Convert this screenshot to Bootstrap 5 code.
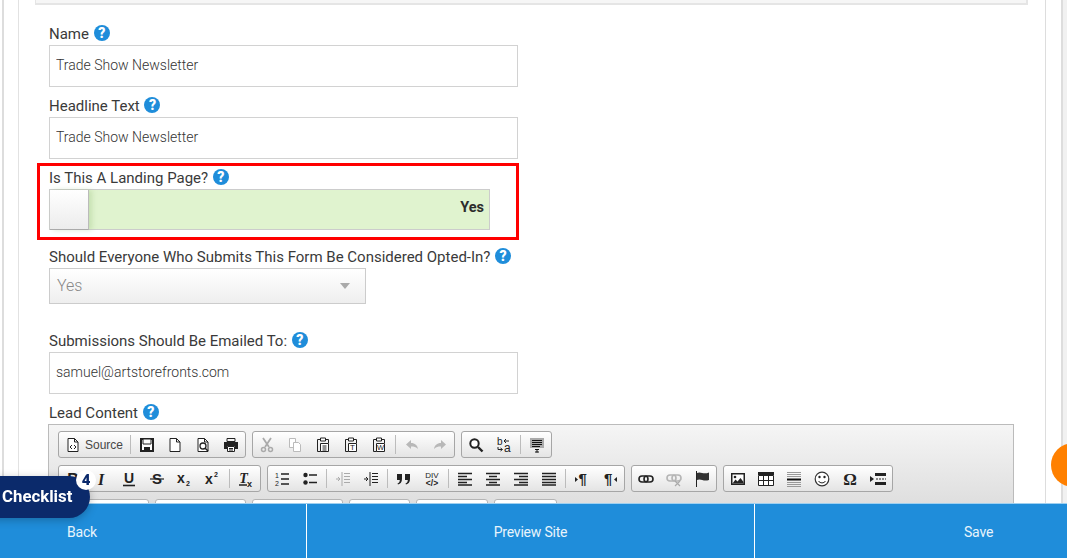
<!DOCTYPE html>
<html lang="en"><head><meta charset="utf-8"><title>Form</title>
<link href="https://cdn.jsdelivr.net/npm/bootstrap@5.3.0/dist/css/bootstrap.min.css" rel="stylesheet">
<style>
html,body{height:558px;overflow:hidden;background:#fff}
body{font-family:Roboto,"Liberation Sans",sans-serif;color:#333;font-size:15px}
.rail-r{position:fixed;top:0;right:0;width:6px;height:558px;background:#f1f1f1;border-left:2px solid #ddd}
.outer{margin-left:2px;border-left:2px solid #ddd;height:558px;width:1059px;padding-left:14px}
.panel{border-left:1px solid #e2e2e2;border-right:1px solid #ddd;width:1028px;height:558px;padding:0 17px 0 16px}
.strip{height:5px;background:#f6f6f6;border-right:2px solid #e5e5e5;border-bottom:2px solid #e5e5e5;border-left:1px solid #e5e5e5;width:993px;margin-bottom:19px}
.fwrap{padding-left:14px}
.lbl{display:block;height:21px;line-height:21px;margin:0;color:#3a3a3a;font-size:15px;white-space:nowrap}
.hlp{display:inline-block;width:16px;height:16px;margin-left:1px;border-radius:50%;background:#1f8dda;color:#fff;font-weight:900;font-size:14px;line-height:16px;text-align:center;vertical-align:1px}
.fld.form-control{width:469px;height:42px;border:1px solid #d2d2d2;border-radius:0;padding:0 6px 2px;font-size:14px;font-weight:300;color:#333;box-shadow:none;margin-bottom:9px}
.redbox{width:482px;margin:-5px 0 7px -12px;border:3px solid #f00;padding:2px 0 7px 9px}
.tgl{width:441px;height:41px;background:#e0f3cf;border:1px solid #ccc}
.knob{width:39px;height:40px;background:linear-gradient(#fff,#ececec);border-right:1px solid #bbb;border-bottom:1px solid #aaa;box-shadow:3px 0 5px rgba(150,190,120,.35)}
.yes{font-weight:700;font-size:14.5px;color:#2c2c2c;padding:0 5px 4px 0}
.sel{width:317px;height:36px;margin-bottom:27px;border:1px solid #ccc;background:linear-gradient(#fff,#eee);color:#888;font-size:16px;font-weight:300;padding:0 15px 0 7px}
.caret{width:0;height:0;border-left:5.5px solid transparent;border-right:5.5px solid transparent;border-top:6px solid #aaa}
.editor{margin-left:-1px;width:966px;height:135px;border:1px solid #bbb;border-bottom:0;background:linear-gradient(#f5f5f5,#cfcfcf);padding:6px 0 0 9px}
.tbrow{height:27px;margin-bottom:7px;gap:6px}
.tgrp{height:27px;border:1px solid #a6a6a6;border-radius:3px;background:linear-gradient(#fff,#e4e4e4)}
.tb{width:28px;height:25px;display:flex;align-items:center;justify-content:center;flex:none}
.tb svg{width:16px;height:16px;display:block;overflow:visible}
.tb text{font-family:"Liberation Sans",sans-serif;fill:#222}
.sp{width:5px;height:19px;margin-top:3px;flex:none;position:relative}
.sp::after{content:"";position:absolute;left:2px;top:0;width:1px;height:19px;background:#bcbcbc}
.srcb{width:69px;height:25px;padding-left:6px;gap:4px;font:12px "Liberation Sans",sans-serif;color:#474747;flex:none}
.srcb svg{width:16px;height:16px}
.combo{height:30px;background:#fff;border:1px solid #b5b5b5;border-radius:3px}
.cw91{width:91px}.cw61{width:61px}.cw72{width:72px}.cw63{width:63px}
.botbar{height:55px;background:#1f8dda;border-top:1px solid #9fd0f0}
.botbar a{color:#e8f4fc;text-decoration:none;font-size:14px;height:54px;letter-spacing:-.2px;padding-top:2px}
.bk{width:306px;padding-left:67px}
.pv{width:449px;border-left:1px solid #fff;border-right:1px solid #fff;justify-content:center}
.sv{flex:1;padding-left:209px}
.chk{position:fixed;left:-20px;top:476px;width:110px;height:42px;background:#0b2a6b;border-radius:0 21px 21px 0;color:#fff;font-weight:700;font-size:16.8px;line-height:41px;padding-left:22px;box-shadow:0 2px 8px rgba(0,0,0,.25);z-index:1040}
.chk b{position:absolute;right:-6px;top:-6px;width:20px;height:20px;border-radius:50%;background:#fff;color:#0b2a6b;font-size:15px;line-height:20px;text-align:center;font-weight:900}
.orb{position:fixed;left:1051px;top:443px;width:44px;height:44px;border-radius:50%;background:#ff8000}
</style></head><body>
<svg width="0" height="0" style="position:absolute" aria-hidden="true"><defs>
<g id="i-doc"><path d="M3 1.500h6.500l3.500 3.500v9.500H3z M9.500 1.500V5H13" fill="#fff" stroke="#222"/></g>
<g id="i-clip"><path d="M5 2.500H2.500v12h3M11 2.500h2.500V6" fill="none" stroke="#222"/><path d="M5.500 1h5v3h-5z" fill="#fff" stroke="#222"/><path d="M5.500 6.500h8v8h-8z" fill="#fff" stroke="#222"/></g>
</defs></svg>
<div class="rail-r"></div>
<div class="outer"><div class="panel">
<div class="strip"></div>
<div class="fwrap">
<label class="lbl">Name <span class="hlp">?</span></label>
<input class="form-control fld" value="Trade Show Newsletter">
<label class="lbl">Headline Text <span class="hlp">?</span></label>
<input class="form-control fld" value="Trade Show Newsletter">
<div class="redbox">
<label class="lbl">Is This A Landing Page? <span class="hlp">?</span></label>
<div class="tgl d-flex align-items-center justify-content-between"><span class="knob"></span><span class="yes">Yes</span></div>
</div>
<label class="lbl">Should Everyone Who Submits This Form Be Considered Opted-In? <span class="hlp">?</span></label>
<div class="sel d-flex align-items-center justify-content-between"><span>Yes</span><span class="caret"></span></div>
<label class="lbl">Submissions Should Be Emailed To: <span class="hlp">?</span></label>
<input class="form-control fld" value="samuel@artstorefronts.com">
<label class="lbl">Lead Content <span class="hlp">?</span></label>
<div class="editor">
 <div class="d-flex tbrow">
  <div class="tgrp d-flex">
   <span class="srcb d-flex align-items-center"><svg viewBox="0 0 16 16"><use href="#i-doc"/><path d="M7 8l-2 2 2 2M9 8l2 2-2 2" fill="none" stroke="#222"/></svg>Source</span><span class="sp"></span>
   <span class="tb"><svg viewBox="0 0 16 16"><path d="M2 2h12v12H2z" fill="#fff" stroke="#222" stroke-width="2"/><path d="M4 2h8v5H4z" fill="#fff" stroke="#222"/><path d="M5 10h6v4H5z" fill="#222"/></svg></span>
   <span class="tb"><svg viewBox="0 0 16 16"><use href="#i-doc"/></svg></span>
   <span class="tb"><svg viewBox="0 0 16 16"><use href="#i-doc"/><circle cx="8" cy="9" r="3" fill="none" stroke="#222" stroke-width="1.300"/><path d="M10 11l3 3" stroke="#222" stroke-width="1.500"/></svg></span>
   <span class="tb"><svg viewBox="0 0 16 16"><path d="M4 1.500h8v3H4z" fill="none" stroke="#222"/><path d="M1 5h14v7h-3V9H4v3H1z" fill="#222"/><path d="M4.500 9.500h7v5h-7z" fill="#fff" stroke="#222"/><path d="M6 11.500h4M6 13h4" stroke="#222"/></svg></span>
  </div>
  <div class="tgrp d-flex">
   <span class="tb"><svg viewBox="0 0 16 16"><path d="M4 1l6 9M12 1l-6 9" stroke="#aaa" stroke-width="1.800" fill="none"/><circle cx="4.500" cy="12.500" r="2" fill="none" stroke="#aaa" stroke-width="1.500"/><circle cx="11.500" cy="12.500" r="2" fill="none" stroke="#aaa" stroke-width="1.500"/></svg></span>
   <span class="tb"><svg viewBox="0 0 16 16"><path d="M2.500 1.500h6v9h-6z" fill="#fff" stroke="#bbb"/><path d="M6.500 5.500h5l2 2v7h-7z" fill="#fff" stroke="#bbb"/></svg></span>
   <span class="tb"><svg viewBox="0 0 16 16"><use href="#i-clip"/><path d="M7.500 9h4M7.500 11h4M7.500 13h4" stroke="#222"/></svg></span>
   <span class="tb"><svg viewBox="0 0 16 16"><use href="#i-clip"/><text x="9.500" y="13" font-size="8" text-anchor="middle">T</text></svg></span>
   <span class="tb"><svg viewBox="0 0 16 16"><use href="#i-clip"/><text x="9.500" y="13" font-size="7.500" text-anchor="middle">W</text></svg></span>
   <span class="sp"></span>
   <span class="tb"><svg viewBox="0 0 16 16"><path d="M7 3L2 7.500 7 12V9.500c3 0 5 .5 7 2.500-.5-3.500-3-6-7-6z" fill="#b8b8b8"/></svg></span>
   <span class="tb"><svg viewBox="0 0 16 16"><path d="M9 3l5 4.500L9 12V9.500c-3 0-5 .5-7 2.500.5-3.500 3-6 7-6z" fill="#b8b8b8"/></svg></span>
  </div>
  <div class="tgrp d-flex">
   <span class="tb"><svg viewBox="0 0 16 16"><circle cx="6.500" cy="6.500" r="4.200" fill="#fff" stroke="#222" stroke-width="2"/><path d="M10 10l4.500 4.500" stroke="#222" stroke-width="2.400"/></svg></span>
   <span class="tb"><svg viewBox="0 0 16 16"><text x="1" y="8" font-size="10">b</text><text x="8" y="15" font-size="12">a</text><path d="M13 4H8M10 2L8 4l2 2M2 10v2.500h4M4.500 11L6.500 12.500l-2 1.500" fill="none" stroke="#222"/></svg></span>
   <span class="sp"></span>
   <span class="tb"><svg viewBox="0 0 16 16"><path d="M1 1h14v10H1z" fill="#aaa"/><path d="M3 3h10v1H3zM3 5h10v1H3zM3 7h10v1H3zM3 9h8v1H3z" fill="#111"/><path d="M6 12.500h4M8 12.500v3M6 15h4" stroke="#111"/></svg></span>
  </div>
 </div>
 <div class="d-flex tbrow">
  <div class="tgrp d-flex">
   <span class="tb"><svg viewBox="0 0 16 16"><text x="8" y="13.500" font-size="16" font-weight="700" text-anchor="middle">B</text></svg></span>
   <span class="tb"><svg viewBox="0 0 16 16"><text x="8" y="13.500" font-size="16" font-weight="700" font-style="italic" text-anchor="middle" style="font-family:'Liberation Serif',serif">I</text></svg></span>
   <span class="tb"><svg viewBox="0 0 16 16"><text x="8" y="12" font-size="14" font-weight="700" text-anchor="middle">U</text><path d="M2 14.500h12" stroke="#222" stroke-width="1.600"/></svg></span>
   <span class="tb"><svg viewBox="0 0 16 16"><text x="8" y="13" font-size="15" font-weight="700" text-anchor="middle">S</text><path d="M1 8h14" stroke="#222" stroke-width="1.200"/></svg></span>
   <span class="tb"><svg viewBox="0 0 16 16"><text x="0" y="12" font-size="14" font-weight="700">x</text><text x="9" y="15" font-size="7" font-weight="700">2</text></svg></span>
   <span class="tb"><svg viewBox="0 0 16 16"><text x="0" y="13" font-size="14" font-weight="700">x</text><text x="9" y="6" font-size="7" font-weight="700">2</text></svg></span>
   <span class="sp"></span>
   <span class="tb"><svg viewBox="0 0 16 16"><text x="5.500" y="12" font-size="14" font-weight="700" font-style="italic" text-anchor="middle" style="font-family:'Liberation Serif',serif">T</text><path d="M1 14h8" stroke="#222" stroke-width="1.500"/><text x="9" y="15.500" font-size="9" font-weight="700">x</text></svg></span>
  </div>
  <div class="tgrp d-flex">
   <span class="tb"><svg viewBox="0 0 16 16"><path d="M7 3h8M7 8h8M7 13h8" stroke="#222" stroke-width="1.500"/><text x="1" y="7" font-size="7">1</text><text x="1" y="15" font-size="7">2</text></svg></span>
   <span class="tb"><svg viewBox="0 0 16 16"><circle cx="3.500" cy="4" r="2.200" fill="#222"/><circle cx="3.500" cy="11.500" r="2.200" fill="#222"/><path d="M7 4h8M7 11.500h8" stroke="#222" stroke-width="1.600"/></svg></span>
   <span class="sp"></span>
   <span class="tb"><svg viewBox="0 0 16 16"><path d="M9 2.500h6M9 5.500h6M9 8.500h6M9 11.500h6M7 1v14M1 8h4M3 6l2 2-2 2" stroke="#aaa" fill="none"/></svg></span>
   <span class="tb"><svg viewBox="0 0 16 16"><path d="M9 2.500h6M9 5.500h6M9 8.500h6M9 11.500h6M7 1v14M1 8h4M3 6l2 2-2 2" stroke="#222" fill="none"/></svg></span>
   <span class="sp"></span>
   <span class="tb"><svg viewBox="0 0 16 16"><path d="M1 3h5v5c0 3-1.500 5-4 5.500l-.5-1c1.500-.5 2.300-1.500 2.300-3.500H1zM9 3h5v5c0 3-1.500 5-4 5.500l-.5-1c1.500-.5 2.300-1.500 2.300-3.500H9z" fill="#222"/></svg></span>
   <span class="tb"><svg viewBox="0 0 16 16"><text x="8" y="7" font-size="8" text-anchor="middle">DIV</text><text x="8" y="15" font-size="8.500" font-weight="700" text-anchor="middle">&lt;/&gt;</text></svg></span>
   <span class="sp"></span>
   <span class="tb"><svg viewBox="0 0 16 16"><path d="M1 2.500h14M1 5.500h9M1 8.500h14M1 11.500h9M1 14h14" stroke="#222" stroke-width="1.500"/></svg></span>
   <span class="tb"><svg viewBox="0 0 16 16"><path d="M1 2.500h14M4 5.500h8M1 8.500h14M4 11.500h8M1 14h14" stroke="#222" stroke-width="1.500"/></svg></span>
   <span class="tb"><svg viewBox="0 0 16 16"><path d="M1 2.500h14M6 5.500h9M1 8.500h14M6 11.500h9M1 14h14" stroke="#222" stroke-width="1.500"/></svg></span>
   <span class="tb"><svg viewBox="0 0 16 16"><path d="M1 2.500h14M1 5.500h14M1 8.500h14M1 11.500h14M1 14h14" stroke="#222" stroke-width="1.500"/></svg></span>
   <span class="sp"></span>
   <span class="tb"><svg viewBox="0 0 16 16"><path d="M1 6l3 2.500L1 11z" fill="#222"/><text x="4.500" y="13" font-size="15" font-weight="700">¶</text></svg></span>
   <span class="tb"><svg viewBox="0 0 16 16"><path d="M15 6l-3 2.500 3 2.500z" fill="#222"/><text x="2" y="13" font-size="15" font-weight="700">¶</text></svg></span>
  </div>
  <div class="tgrp d-flex">
   <span class="tb"><svg viewBox="0 0 16 16"><rect x="1" y="5" width="9" height="6" rx="3" fill="none" stroke="#222" stroke-width="1.600"/><rect x="6" y="5" width="9" height="6" rx="3" fill="none" stroke="#222" stroke-width="1.600"/></svg></span>
   <span class="tb"><svg viewBox="0 0 16 16"><rect x="1" y="4" width="9" height="6" rx="3" fill="none" stroke="#b5b5b5" stroke-width="1.600"/><rect x="6" y="4" width="9" height="6" rx="3" fill="none" stroke="#b5b5b5" stroke-width="1.600"/><path d="M9 10l5 5M14 10l-5 5" stroke="#aaa" stroke-width="1.200"/></svg></span>
   <span class="tb"><svg viewBox="0 0 16 16"><path d="M2.500 0v16" stroke="#222"/><path d="M3 2c4-2 6 2 12-.5V9C9 11 7 7 3 9z" fill="#333"/></svg></span>
  </div>
  <div class="tgrp d-flex">
   <span class="tb"><svg viewBox="0 0 16 16"><path d="M1 2h14v12H1z" fill="#222"/><path d="M2.500 3.500h11v9h-11z" fill="#fff"/><circle cx="5" cy="6" r="1.300" fill="#222"/><path d="M2.500 12.500l3-4 2 2 3-3.500 3 4v1.500z" fill="#222"/></svg></span>
   <span class="tb"><svg viewBox="0 0 16 16"><path d="M0 1h16v3H0z" fill="#222"/><path d="M.5 4.500h15v10H.5zM.5 9.500h15M5.500 4.500v10M10.500 4.500v10" fill="#fff" stroke="#222"/></svg></span>
   <span class="tb"><svg viewBox="0 0 16 16"><path d="M1 1.500h14M1 3.500h14M1 5.500h14M1 11.500h14M1 13.500h14M1 15.500h14" stroke="#999"/><path d="M1 8.500h14" stroke="#111" stroke-width="2"/></svg></span>
   <span class="tb"><svg viewBox="0 0 16 16"><circle cx="8" cy="8" r="6.800" fill="#fff" stroke="#333" stroke-width="1.200"/><circle cx="5.500" cy="6" r="1.200" fill="#222"/><circle cx="10.500" cy="6" r="1.200" fill="#222"/><path d="M4.500 10c1.500 2.500 5.500 2.500 7 0" fill="none" stroke="#222"/></svg></span>
   <span class="tb"><svg viewBox="0 0 16 16"><text x="8" y="14" font-size="17" font-weight="700" text-anchor="middle" style="font-family:'Liberation Serif',serif">Ω</text></svg></span>
   <span class="tb"><svg viewBox="0 0 16 16"><path d="M5 2h11v3H5zM5 11h11v3H5z" fill="#222"/><path d="M6 8h10" stroke="#222" stroke-dasharray="2 1"/><path d="M0 5l4 3-4 3z" fill="#222"/></svg></span>
  </div>
 </div>
 <div class="d-flex tbrow">
  <span class="combo cw91"></span><span class="combo cw91"></span><span class="combo cw91"></span><span class="combo cw61"></span><span class="combo cw72"></span><span class="combo cw63"></span>
 </div>
</div>
</div>
</div></div>
<div class="chk">Checklist<b>4</b></div>
<div class="orb"></div>
<div class="fixed-bottom botbar d-flex">
 <a class="bk d-flex align-items-center" href="#">Back</a>
 <a class="pv d-flex align-items-center" href="#">Preview Site</a>
 <a class="sv d-flex align-items-center" href="#">Save</a>
</div>
</body></html>
